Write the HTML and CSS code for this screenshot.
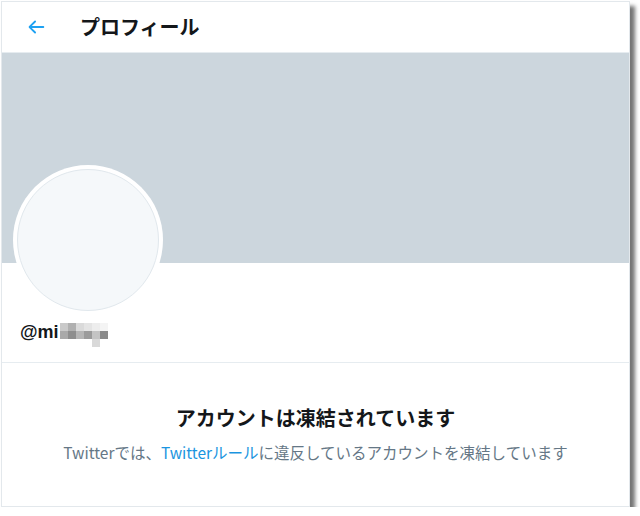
FILE: index.html
```html
<!DOCTYPE html>
<html lang="ja">
<head>
<meta charset="utf-8">
<title>プロフィール</title>
<link rel="stylesheet" href="styles.css">
</head>
<body>
<div class="frame">
  <header class="topbar">
    <svg class="back" viewBox="0 0 24 24" width="22" height="22" aria-hidden="true">
      <path d="M20 11H7.414l4.293-4.293a1 1 0 0 0-1.414-1.414l-6 6a1 1 0 0 0 0 1.414l6 6a1 1 0 0 0 1.414-1.414L7.414 13H20a1 1 0 1 0 0-2z" fill="#1da1f2"/>
    </svg>
    <h1 class="title">プロフィール</h1>
  </header>
  <div class="banner"></div>
  <section class="profile">
    <div class="avatar"><div class="avatar-inner"></div></div>
    <div class="handle">
      <span>@mi</span>
      <span class="mosaic">
        <i class="m1"></i><i class="m2"></i><i class="m3"></i><i class="m4"></i><i class="m5"></i><i class="m6"></i>
        <i class="m7"></i><i class="m8"></i><i class="m9"></i><i class="m10"></i><i class="m11"></i><i class="m12"></i>
        <i class="m0"></i><i class="m0"></i><i class="m0"></i><i class="m0"></i><i class="m13"></i><i class="m0"></i>
      </span>
    </div>
  </section>
  <section class="suspended">
    <h2 class="s-title">アカウントは凍結されています</h2>
    <p class="s-text">Twitterでは、<a class="link">Twitterルール</a>に違反しているアカウントを凍結しています</p>
  </section>
</div>
</body>
</html>
```
FILE: styles.css
```css
html, body {
  margin: 0;
  padding: 0;
  background: #ffffff;
}
body {
  font-family: "Noto Sans CJK JP", "Noto Sans", sans-serif;
  color: #14171a;
}
.frame {
  margin: 1px 0 0 1px;
  width: 627px;
  height: 504px;
  border: 1px solid #e3e8ec;
  background: #fff;
  box-shadow: 5px 5px 4px rgba(0, 0, 0, 0.55);
  overflow: hidden;
  display: flex;
  flex-direction: column;
}
.topbar {
  height: 50px;
  border-bottom: 1px solid #e6ecf0;
  display: flex;
  align-items: center;
  padding-left: 23px;
  flex: none;
}
.back {
  display: block;
}
.title {
  margin: 0 0 0 33px;
  font-size: 20px;
  font-weight: 700;
  line-height: 24px;
  color: #14171a;
}
.banner {
  height: 210px;
  background: #ccd6dd;
  flex: none;
}
.profile {
  padding: 0 0 0 11px;
  border-bottom: 1px solid #e6ecf0;
  height: 99px;
  flex: none;
}
.avatar {
  margin-top: -98px;
  width: 150px;
  height: 150px;
  border-radius: 50%;
  background: #fff;
  padding: 4px;
  box-sizing: border-box;
}
.avatar-inner {
  width: 100%;
  height: 100%;
  border-radius: 50%;
  background: #f5f8fa;
  border: 1px solid #e1e8ed;
  box-sizing: border-box;
}
.handle {
  margin: 2px 0 0 7px;
  display: flex;
  align-items: center;
  font-family: "Liberation Sans", "Noto Sans", sans-serif;
  font-weight: 700;
  font-size: 18px;
  line-height: 22px;
  color: #14171a;
}
.mosaic {
  display: grid;
  grid-template-columns: repeat(6, 8px);
  grid-template-rows: repeat(3, 8px);
  margin-left: 1px;
  margin-top: 6px;
}
.mosaic i { display: block; }
.m0 { background: transparent; }
.m1 { background: #c9c9c9; }
.m2 { background: #b0b0b0; }
.m3 { background: #dadada; }
.m4 { background: #e4e4e4; }
.m5 { background: #ededed; }
.m6 { background: #f4f4f4; }
.m7 { background: #a9a9a9; }
.m8 { background: #8e8e8e; }
.m9 { background: #b5b5b5; }
.m10 { background: #9b9b9b; }
.m11 { background: #c4c4c4; }
.m12 { background: #8a8a8a; }
.m13 { background: #d9d9d9; }
.suspended {
  display: flex;
  flex-direction: column;
  align-items: center;
  padding-top: 42px;
}
.s-title {
  margin: 0;
  font-size: 20px;
  font-weight: 700;
  line-height: 26px;
  color: #14171a;
}
.s-text {
  margin: 11px 0 0;
  font-size: 15.5px;
  line-height: 20px;
  color: #657786;
}
.link {
  color: #1b95e0;
  text-decoration: none;
}
```
